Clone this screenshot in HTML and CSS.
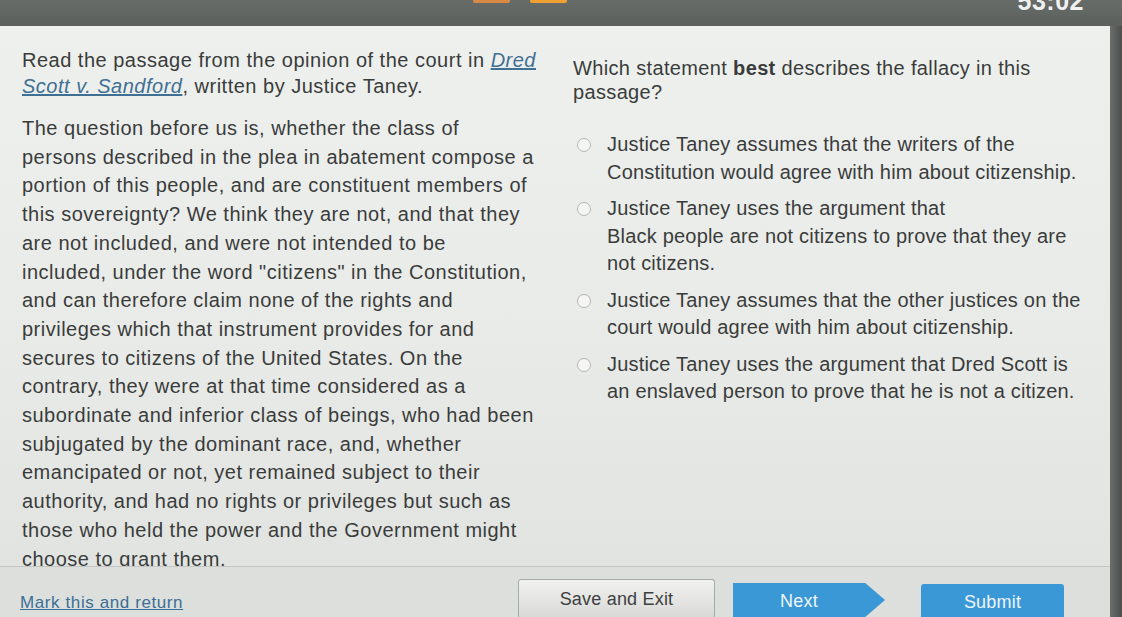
FILE: index.html
```html
<!DOCTYPE html>
<html>
<head>
<meta charset="utf-8">
<link rel="stylesheet" href="styles.css">
</head>
<body>
<div class="topbar">
  <div class="tabs"><span class="tab"></span><span class="tab"></span></div>
  <div class="timer">53:02</div>
</div>
<div class="screen">
  <div class="panel">
    <div class="content">
      <div class="passage">
        <p class="intro">Read the passage from the opinion of the court in <a class="case">Dred<br>Scott v. Sandford</a>, written by Justice Taney.</p>
        <p class="quote">The question before us is, whether the class of<br>persons described in the plea in abatement compose a<br>portion of this people, and are constituent members of<br>this sovereignty? We think they are not, and that they<br>are not included, and were not intended to be<br>included, under the word "citizens" in the Constitution,<br>and can therefore claim none of the rights and<br>privileges which that instrument provides for and<br>secures to citizens of the United States. On the<br>contrary, they were at that time considered as a<br>subordinate and inferior class of beings, who had been<br>subjugated by the dominant race, and, whether<br>emancipated or not, yet remained subject to their<br>authority, and had no rights or privileges but such as<br>those who held the power and the Government might<br>choose to grant them.</p>
      </div>
      <div class="question">
        <p class="prompt">Which statement <b>best</b> describes the fallacy in this<br>passage?</p>
        <ul class="options">
          <li class="option"><span class="radio"></span><span class="label">Justice Taney assumes that the writers of the<br>Constitution would agree with him about citizenship.</span></li>
          <li class="option"><span class="radio"></span><span class="label">Justice Taney uses the argument that<br>Black people are not citizens to prove that they are<br>not citizens.</span></li>
          <li class="option"><span class="radio"></span><span class="label">Justice Taney assumes that the other justices on the<br>court would agree with him about citizenship.</span></li>
          <li class="option"><span class="radio"></span><span class="label">Justice Taney uses the argument that Dred Scott is<br>an enslaved person to prove that he is not a citizen.</span></li>
        </ul>
      </div>
    </div>
    <div class="footer">
      <a class="mark">Mark this and return</a>
      <div class="buttons">
        <button class="btn save">Save and Exit</button>
        <button class="btn next">Next</button>
        <button class="btn submit">Submit</button>
      </div>
    </div>
  </div>
  <div class="edge"></div>
</div>
</body>
</html>
```
FILE: styles.css
```css
html, body {
  margin: 0;
  padding: 0;
  height: 100%;
  overflow: hidden;
}
body {
  background: #5c615e;
  font-family: "Liberation Sans", Arial, sans-serif;
  color: #3a3c3b;
}
.topbar {
  height: 26px;
  position: relative;
  background: linear-gradient(#676c69, #5b605d);
}
.tabs {
  position: absolute;
  left: 473px;
  top: 0;
  display: flex;
  gap: 20px;
}
.tab {
  display: block;
  width: 37px;
  height: 3px;
  background: #d98a45;
  border-radius: 0 0 2px 2px;
}
.tab + .tab {
  background: #f0a030;
}
.timer {
  position: absolute;
  right: 38px;
  top: -13px;
  color: #f0f0f0;
  font-size: 25px;
  font-weight: bold;
  letter-spacing: 0.5px;
}
.screen {
  display: flex;
  height: 591px;
}
.panel {
  flex: 0 0 1110px;
  display: flex;
  flex-direction: column;
  background: linear-gradient(180deg, #eef0ee 0%, #e9ebe8 50%, #e0e2df 100%);
}
.edge {
  flex: 1;
  background: linear-gradient(90deg, #6a6e6c, #4a4e4c);
}
.content {
  flex: 1;
  min-height: 0;
  overflow: hidden;
  display: grid;
  grid-template-columns: 573px 1fr;
  border-bottom: 1px solid #c3c5c2;
  font-size: 20px;
  letter-spacing: 0.5px;
}
.passage {
  padding: 21px 0 0 22px;
}
.intro {
  margin: 0 0 15px;
  line-height: 26px;
  white-space: nowrap;
}
.case {
  color: #3f6f92;
  font-style: italic;
  text-decoration: underline;
}
.quote {
  margin: 0;
  line-height: 28.7px;
  white-space: nowrap;
}
.question {
  padding: 30px 0 0 0;
  letter-spacing: 0.2px;
}
.prompt {
  margin: 0 0 27px;
  line-height: 24px;
  white-space: nowrap;
  letter-spacing: 0.35px;
}
.prompt b {
  font-weight: bold;
}
.options {
  list-style: none;
  margin: 0;
  padding: 0 0 0 4px;
}
.option {
  display: flex;
  align-items: flex-start;
  gap: 16px;
  margin-bottom: 9px;
  line-height: 27.5px;
  white-space: nowrap;
}
.radio {
  flex: 0 0 12px;
  width: 12px;
  height: 12px;
  margin-top: 7px;
  border: 1px solid #b5b7b4;
  border-radius: 50%;
  background: #f5f6f4;
}
.footer {
  flex: 0 0 50px;
  display: flex;
  align-items: flex-end;
  justify-content: space-between;
  padding: 0 46px 0 20px;
  background: #dddfdc;
}
.mark {
  color: #3a6f96;
  text-decoration: underline;
  font-size: 17px;
  letter-spacing: 0.6px;
  margin-bottom: 4px;
}
.buttons {
  display: flex;
  align-items: flex-end;
  gap: 20px;
}
.btn {
  font-family: "Liberation Sans", Arial, sans-serif;
  font-size: 18px;
  letter-spacing: 0.2px;
  border: none;
  padding: 0;
}
.save {
  width: 197px;
  height: 38px;
  margin-right: -2px;
  padding-top: 2px;
  background: linear-gradient(#f1f2f0, #d9dad7);
  border: 1px solid #a8aaa7;
  border-bottom: none;
  border-radius: 3px 3px 0 0;
  color: #3e403f;
}
.next {
  width: 152px;
  height: 34px;
  margin-right: 16px;
  padding: 2px 20px 0 0;
  background: #3b98d6;
  color: #eef6fb;
  clip-path: polygon(0 0, 87% 0, 100% 50%, 87% 100%, 0 100%);
}
.submit {
  width: 143px;
  height: 33px;
  padding-top: 4px;
  background: #3b98d6;
  color: #eef6fb;
  border-radius: 3px 3px 0 0;
}
```
